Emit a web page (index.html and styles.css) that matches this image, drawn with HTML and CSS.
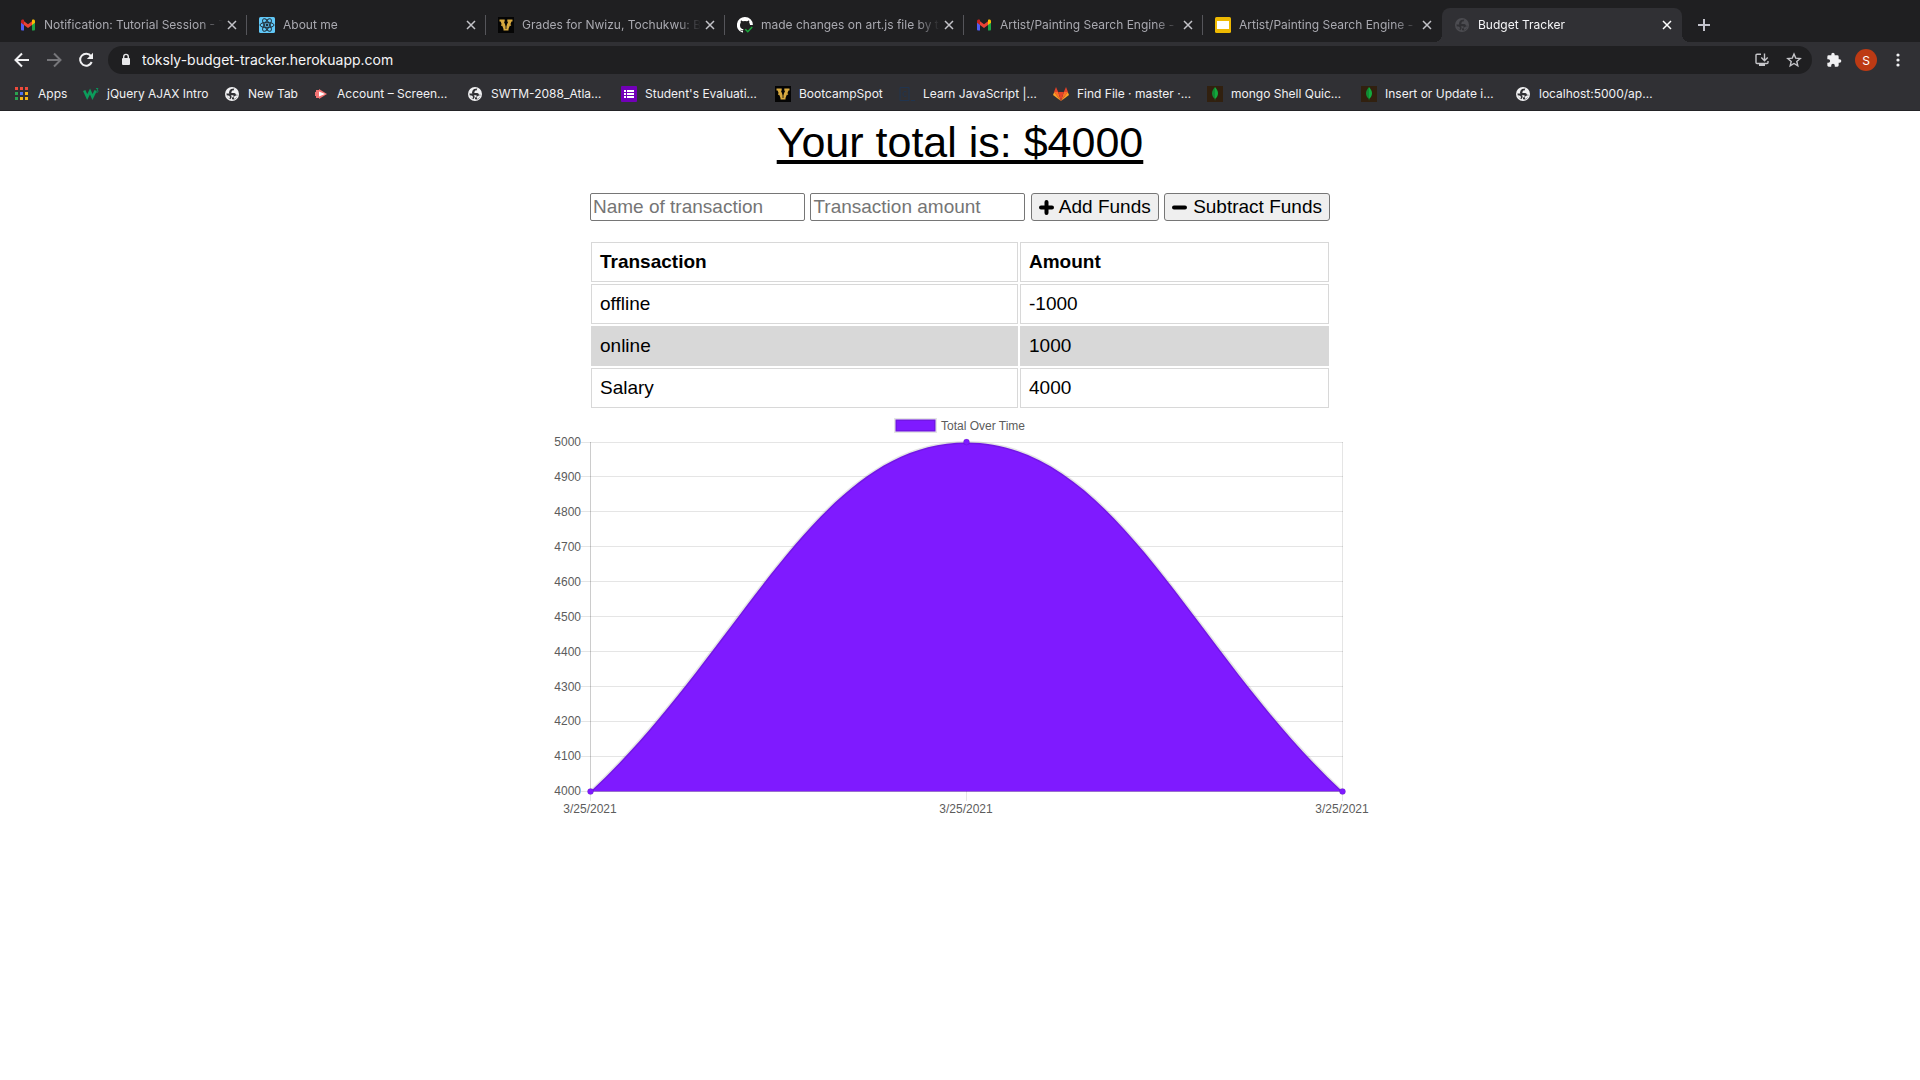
FILE: index.html
```html
<!DOCTYPE html>
<html lang="en">
<head>
<meta charset="utf-8">
<title>Budget Tracker</title>
<link rel="stylesheet" href="styles.css">
</head>
<body>
<svg class="defs" aria-hidden="true">
  <symbol id="gmail" viewBox="0 0 16 16">
    <path fill="#4f5df5" d="M1 5v7.500q0 1 1 1h2V7z"/>
    <path fill="#1ea446" d="M15 5v7.500q0 1-1 1h-2V7z"/>
    <path fill="#ea4335" d="M4 4.200 8 7.200l4-3v3.900l-4 3-4-3z"/>
    <path fill="#c5221f" d="M1 4.300C1 2.500 2.800 2 4 2.900v5.200L1 5.800z"/>
    <path fill="#fbbc04" d="M15 4.300c0-1.800-1.800-2.300-3-1.400v5.200l3-2.300z"/>
  </symbol>
  <symbol id="react" viewBox="0 0 16 16">
    <rect width="16" height="16" rx="1.500" fill="#61c8f8"/>
    <g fill="none" stroke="#20303c" stroke-width="1">
      <ellipse cx="8" cy="8" rx="7" ry="2.700"/>
      <ellipse cx="8" cy="8" rx="7" ry="2.700" transform="rotate(60 8 8)"/>
      <ellipse cx="8" cy="8" rx="7" ry="2.700" transform="rotate(120 8 8)"/>
    </g>
    <circle cx="8" cy="8" r="1.400" fill="#20303c"/>
  </symbol>
  <symbol id="vandy" viewBox="0 0 16 16">
    <rect width="16" height="16" fill="#050505"/>
    <path fill="#d8a93f" d="M1.500 2.500h5.200v2.200h-.8L8 9.500l2.200-4.800h-.9V2.500h5.200v2h-1l-1.200 3h.8v1.200h-1.300L10.500 12v1.500h-5V12L4.200 8.700H3V7.500h.8l-1.200-3H1.500z"/>
    <path stroke="#050505" stroke-width=".8" d="M8 5v7"/>
  </symbol>
  <symbol id="github" viewBox="0 0 16 16">
    <path fill="#fff" d="M8 0a8 8 0 0 0-2.600 15.600c.4.100.6-.2.600-.4v-1.400c-2.300.5-2.800-1-2.800-1 .5 0 .9.800 2.800.5.100-.6.300-1 .6-1.200C4.800 11.900 3 11 3 7.900c0-.9.300-1.600.8-2.200-.2-.6-.2-1.400.2-2.300 0 0 .8 0 2 .9a7 7 0 0 1 4 0c1.200-.9 2-.9 2-.9.400.9.400 1.700.2 2.300.5.600.8 1.300.8 2.200h2.900A8 8 0 0 0 8 0z"/>
    <path fill="none" stroke="#1aab3b" stroke-width="1.500" d="m8.300 12.200 2.500 2.500L15.200 10"/>
  </symbol>
  <symbol id="slides" viewBox="0 0 16 16">
    <rect width="16" height="16" rx="1.500" fill="#eeb902"/><rect x="2" y="4" width="12" height="8" fill="#fff"/>
  </symbol>
  <symbol id="globe" viewBox="0 0 16 16">
    <circle cx="8" cy="8" r="7" fill="currentColor"/>
    <path fill="#303034" d="M10.300 2.600 9.500 4.500H8.200L7.400 6v1h2.800q1.600.2 1.800 1.800h1.600q-.4 3.200-3.400 4.600L8 13.300v-1.500l1.500-1.200V9.200H6.200Q5 8.800 5 6.500q.2-2.600 2-3.600z"/>
    <path fill="#303034" d="M2.400 7.600h2.900l2.200 2.500v1.600l-1.300 1.500Q3 12 2.400 7.600z"/>
    <path fill="currentColor" d="m2.600 9.200 2.600.5.800 1.300-.5 1.800Q3.200 11.800 2.600 9.200zM9.400 10.500l1.600-.3 1-1 1.600.3q-.8 2.700-3.400 3.600z"/>
  </symbol>
  <symbol id="mongo" viewBox="0 0 16 16">
    <rect width="16" height="16" fill="#31200f"/>
    <path fill="#13aa3d" d="M8 1c2 2.300 3 4 3 6.300 0 2.700-1.200 4.300-2.700 5.500L8 15z"/>
    <path fill="#118b33" d="M8 1C6 3.300 5 5 5 7.300c0 2.700 1.200 4.300 2.700 5.500L8 15z"/>
  </symbol>
  <symbol id="close" viewBox="0 0 14 14"><path fill="none" stroke="currentColor" stroke-width="1.500" d="m3 3 8 8m0-8-8 8"/></symbol>
</svg>

<div class="browser">
  <nav class="tabs" aria-label="Tabs">
    <div class="tab"><svg class="icon"><use href="#gmail"/></svg><span class="tab-title">Notification: Tutorial Session - T</span><button class="close" aria-label="Close tab"><svg><use href="#close"/></svg></button></div>
    <div class="tab"><svg class="icon"><use href="#react"/></svg><span class="tab-title">About me</span><button class="close" aria-label="Close tab"><svg><use href="#close"/></svg></button></div>
    <div class="tab"><svg class="icon"><use href="#vandy"/></svg><span class="tab-title">Grades for Nwizu, Tochukwu: B</span><button class="close" aria-label="Close tab"><svg><use href="#close"/></svg></button></div>
    <div class="tab"><svg class="icon"><use href="#github"/></svg><span class="tab-title">made changes on art.js file by t</span><button class="close" aria-label="Close tab"><svg><use href="#close"/></svg></button></div>
    <div class="tab"><svg class="icon"><use href="#gmail"/></svg><span class="tab-title">Artist/Painting Search Engine -</span><button class="close" aria-label="Close tab"><svg><use href="#close"/></svg></button></div>
    <div class="tab tab-last"><svg class="icon"><use href="#slides"/></svg><span class="tab-title">Artist/Painting Search Engine -</span><button class="close" aria-label="Close tab"><svg><use href="#close"/></svg></button></div>
    <div class="tab tab-active"><svg class="icon dim"><use href="#globe"/></svg><span class="tab-title">Budget Tracker</span><button class="close" aria-label="Close tab"><svg><use href="#close"/></svg></button></div>
    <button class="new-tab" aria-label="New tab"><svg viewBox="0 0 14 14"><path fill="none" stroke="currentColor" stroke-width="2" d="M7 1v12M1 7h12"/></svg></button>
  </nav>

  <div class="toolbar">
    <button class="tool" aria-label="Back"><svg viewBox="0 0 16 16"><path fill="none" stroke="#f1f1f3" stroke-width="2" d="M15 8H2.500M8 1.500 1.500 8 8 14.500"/></svg></button>
    <button class="tool" aria-label="Forward"><svg viewBox="0 0 16 16"><path fill="none" stroke="#76767a" stroke-width="2" d="M1 8h12.500M8 1.500 14.500 8 8 14.500"/></svg></button>
    <button class="tool" aria-label="Reload"><svg viewBox="0 0 16 16"><path fill="none" stroke="#f1f1f3" stroke-width="2" d="M13 4.200A6 6 0 1 0 13.700 10"/><path fill="#f1f1f3" d="M15 .8V7H8.800z"/></svg></button>
    <div class="omnibox">
      <svg class="lock" viewBox="0 0 10 14"><rect x="1" y="5" width="8" height="7" rx="1" fill="#e8e8ea"/><path fill="none" stroke="#e8e8ea" stroke-width="1.400" d="M2.700 5.500V3.700a2.300 2.300 0 0 1 4.600 0v1.800"/></svg>
      <input class="url" type="text" aria-label="Address" value="toksly-budget-tracker.herokuapp.com">
      <button class="tool" aria-label="Install app"><svg viewBox="0 0 16 16"><path fill="none" stroke="#c6c6ca" stroke-width="1.400" d="M7 2.200H3Q2 2.200 2 3.200v7.300q0 1 1 1h10q1 0 1-1V9M10.500 1.500v7M7.300 5.600l3.200 3.200 3.200-3.200"/><path fill="#c6c6ca" d="M5 12h6v2H5z"/></svg></button>
      <button class="tool" aria-label="Bookmark"><svg viewBox="0 0 16 16"><path fill="none" stroke="#c6c6ca" stroke-width="1.400" d="m8 2 1.700 4.100 4.500.4-3.400 2.900 1 4.400L8 11.500l-3.800 2.300 1-4.400L1.800 6.500l4.500-.4z"/></svg></button>
    </div>
    <button class="tool" aria-label="Extensions"><svg viewBox="0 0 24 24"><path fill="#f1f1f3" d="M20.500 11H19V7a2 2 0 0 0-2-2h-4V3.500a2.500 2.500 0 0 0-5 0V5H4a2 2 0 0 0-2 2v3.800h1.500a2.700 2.700 0 0 1 0 5.400H2V20c0 1.100.9 2 2 2h3.800v-1.500a2.700 2.700 0 0 1 5.400 0V22H17a2 2 0 0 0 2-2v-4h1.500a2.500 2.500 0 0 0 0-5z"/></svg></button>
    <button class="avatar" aria-label="Profile">S</button>
    <button class="tool" aria-label="Menu"><svg viewBox="0 0 16 16" fill="#f1f1f3"><circle cx="8" cy="3" r="1.600"/><circle cx="8" cy="8" r="1.600"/><circle cx="8" cy="13" r="1.600"/></svg></button>
  </div>

  <nav class="bookmarks" aria-label="Bookmarks">
    <a href="#apps" class="bm bm-apps"><svg class="icon" viewBox="0 0 16 16"><path fill="#ee4b3c" d="M1 1h3v3H1zm5 0h3v3H6zm5 0h3v3h-3z"/><path fill="#2aa350" d="M1 6h3v3H1zM1 11h3v3H1z"/><path fill="#4c74f0" d="M6 6h3v3H6z"/><path fill="#f3b917" d="M11 6h3v3h-3zM6 11h3v3H6zm5 0h3v3h-3z"/></svg><span>Apps</span></a>
    <a href="#ajax" class="bm bm-ajax"><svg class="icon" viewBox="0 0 16 16"><path fill="none" stroke="#0c9c5b" stroke-width="2.600" d="m1.200 4.500 3 6.500 2.800-5.500L9.500 11l3.200-6.500"/><path fill="none" stroke="#0c8a56" stroke-width="1" d="M13 2.500h2L14 4.200q1.500 0 1 1.600-.7 1-2 .2"/></svg><span>jQuery AJAX Intro</span></a>
    <a href="#newtab" class="bm bm-tab"><svg class="icon"><use href="#globe"/></svg><span>New Tab</span></a>
    <a href="#account" class="bm bm-long"><svg class="icon" viewBox="0 0 16 16"><path fill="#f27474" d="M3 4h3V3l8 5-8 5v-1H3v-2H2V6h1z"/><path fill="#fff" d="M6 5.500 12 8l-6 2.500z"/></svg><span>Account – Screen…</span></a>
    <a href="#swtm" class="bm bm-long"><svg class="icon"><use href="#globe"/></svg><span>SWTM-2088_Atla…</span></a>
    <a href="#student" class="bm bm-long"><svg class="icon" viewBox="0 0 16 16"><rect width="16" height="16" rx="1" fill="#7200b8"/><path fill="#fff" d="M3 4h2v2H3zm3 0h7v2H6zM3 7h2v2H3zm3 0h7v2H6zm-3 3h2v2H3zm3 0h7v2H6z"/></svg><span>Student's Evaluati…</span></a>
    <a href="#bootcamp" class="bm bm-boot"><svg class="icon"><use href="#vandy"/></svg><span>BootcampSpot</span></a>
    <a href="#learn" class="bm bm-long"><svg class="icon" viewBox="0 0 16 16"><path fill="none" stroke="#20344f" stroke-width="1" d="M1 1.500h9v13H1zM7.500 6Q4 4.500 4 8t3.500 2M12 14.500h4"/></svg><span>Learn JavaScript |…</span></a>
    <a href="#find" class="bm bm-long"><svg class="icon" viewBox="0 0 16 16"><path fill="#fca326" d="M0 9 1.200 6 8 15zm16 0-1.200-3L8 15z"/><path fill="#fc6d26" d="M1 6h4.200L8 15zm14 0h-4.200L8 15z"/><path fill="#e24329" d="m1 6 2-5 2.200 5H10.800L13 1l2 5h-4.200L8 15 5.200 6z"/></svg><span>Find File · master ·…</span></a>
    <a href="#mongo-shell" class="bm bm-long"><svg class="icon"><use href="#mongo"/></svg><span>mongo Shell Quic…</span></a>
    <a href="#insert" class="bm bm-long"><svg class="icon"><use href="#mongo"/></svg><span>Insert or Update i…</span></a>
    <a href="#localhost" class="bm bm-long"><svg class="icon"><use href="#globe"/></svg><span>localhost:5000/ap…</span></a>
  </nav>
</div>

<main class="page">
  <h1 class="total">Your total is: $4000</h1>
  <form class="form">
    <input class="field" type="text" placeholder="Name of transaction" aria-label="Name of transaction">
    <input class="field" type="text" placeholder="Transaction amount" aria-label="Transaction amount">
    <button class="btn" type="button"><svg class="sign" viewBox="0 0 15 15"><path fill="none" stroke="#000" stroke-width="4" stroke-linecap="round" d="M7.500 2v11M2 7.500h11"/></svg>Add Funds</button>
    <button class="btn btn-sub" type="button"><svg class="sign" viewBox="0 0 15 15"><path fill="none" stroke="#000" stroke-width="4" stroke-linecap="round" d="M2 7.500h11"/></svg>Subtract Funds</button>
  </form>
  <table class="ledger">
    <thead><tr><th>Transaction</th><th class="amount">Amount</th></tr></thead>
    <tbody>
      <tr><td>offline</td><td>-1000</td></tr>
      <tr><td>online</td><td>1000</td></tr>
      <tr><td>Salary</td><td>4000</td></tr>
    </tbody>
  </table>
  <svg class="chart" viewBox="0 0 820 410" role="img" aria-label="Total Over Time">
    <path class="grid" d="M31 32.500h762M31 66.500h762M31 101.500h762M31 136.500h762M31 171.500h762M31 206.500h762M31 241.500h762M31 276.500h762M31 311.500h762M31 346.500h762M416.500 32v359M792.500 32v359M40.500 382v9M31 381.500h9"/>
    <path class="area" d="M40.500 381.500C190.900 241.900 266.100 32.500 416.500 32.500S642.100 241.900 792.500 381.500z"/>
    <path class="zero" d="M40.500 32v350M40 381.500h753"/>
    <path class="line" d="M40.500 381.500C190.900 241.900 266.100 32.500 416.500 32.500S642.100 241.900 792.500 381.500"/>
    <g class="dots"><circle cx="40.500" cy="381.500" r="3"/><circle cx="416.500" cy="32" r="3"/><circle cx="792.500" cy="381.500" r="3"/></g>
    <rect class="key" x="345.500" y="9.500" width="40" height="12"/>
    <text x="391" y="20">Total Over Time</text>
    <g text-anchor="end">
      <text x="31" y="36">5000</text><text x="31" y="71">4900</text><text x="31" y="106">4800</text><text x="31" y="141">4700</text><text x="31" y="176">4600</text><text x="31" y="211">4500</text><text x="31" y="246">4400</text><text x="31" y="281">4300</text><text x="31" y="315">4200</text><text x="31" y="350">4100</text><text x="31" y="385">4000</text>
    </g>
    <g text-anchor="middle">
      <text x="40" y="403">3/25/2021</text><text x="416" y="403">3/25/2021</text><text x="792" y="403">3/25/2021</text>
    </g>
  </svg>
</main>
</body>
</html>
```
FILE: styles.css
```css
* { box-sizing: border-box; }
body {
  margin: 0;
  background: #fff;
  color: #000;
  font-family: "Liberation Sans", Arial, sans-serif;
  font-size: 19px;
}
button { font: inherit; color: inherit; cursor: pointer; }
.defs { display: none; }

.browser {
  background: #303034;
  border-bottom: 1px solid #232326;
  color: #f1f1f3;
  font-family: Inter, Roboto, sans-serif;
  font-size: 12px;
}
.icon { width: 16px; height: 16px; flex: none; }

.tabs {
  display: flex;
  height: 42px;
  padding: 8px 0 0 8px;
  background: #1f1f21;
}
.tab {
  display: flex;
  align-items: center;
  gap: 8px;
  flex: 0 1 239px;
  min-width: 0;
  padding: 0 8px 0 12px;
  color: #a9a9b0;
  background: linear-gradient(#55555a, #55555a) right center / 1px 20px no-repeat;
}
.tab-last { background: none; }
.tab-title {
  flex: 1;
  min-width: 0;
  margin-right: -6px;
  overflow: hidden;
  white-space: nowrap;
  line-height: 20px;
  -webkit-mask-image: linear-gradient(90deg, #000 calc(100% - 24px), transparent);
  mask-image: linear-gradient(90deg, #000 calc(100% - 24px), transparent);
}
.close {
  flex: none;
  width: 14px;
  height: 14px;
  padding: 0;
  border: 0;
  background: none;
  color: #c3c3c8;
}
.close svg { display: block; width: 14px; height: 14px; }
.tab-active {
  position: relative;
  flex-basis: 240px;
  background: #303034;
  border-radius: 8px 8px 0 0;
  color: #f5f5f7;
}
/* Flared feet where the active tab meets the toolbar */
.tab-active::before,
.tab-active::after {
  content: "";
  position: absolute;
  bottom: 0;
  width: 8px;
  height: 8px;
}
.tab-active::before { right: 100%; background: radial-gradient(circle at 0 0, #1f1f21 8px, #303034 8px); }
.tab-active::after { left: 100%; background: radial-gradient(circle at 100% 0, #1f1f21 8px, #303034 8px); }
.tab-active .close { color: #fff; }
.dim { color: #4c4c51; }
.new-tab {
  display: flex;
  align-items: center;
  margin-left: 10px;
  padding: 0 5px;
  border: 0;
  background: none;
  color: #c3c3cc;
}
.new-tab svg { width: 14px; height: 14px; }

.toolbar {
  display: flex;
  align-items: center;
  height: 36px;
  padding: 0 6px;
}
.tool {
  display: flex;
  justify-content: center;
  flex: none;
  width: 32px;
  padding: 0;
  border: 0;
  background: none;
}
.tool svg { width: 16px; height: 16px; }
.omnibox {
  display: flex;
  align-items: center;
  flex: 1;
  height: 28px;
  margin: 0 6px;
  padding: 0 2px 0 13px;
  border-radius: 14px;
  background: #1f1f21;
}
.lock { width: 10px; height: 14px; flex: none; }
.url {
  flex: 1;
  min-width: 0;
  margin-left: 11px;
  padding: 0;
  border: 0;
  outline: 0;
  background: none;
  color: #f5f5f7;
  font: 14px/20px Inter, Roboto, sans-serif;
}
.avatar {
  flex: none;
  width: 22px;
  height: 22px;
  margin: 0 5px;
  padding: 0;
  border: 0;
  border-radius: 50%;
  background: #bd3a14;
  color: #fff;
}

.bookmarks {
  display: flex;
  align-items: center;
  gap: 16px;
  height: 32px;
  padding-left: 14px;
}
.bm {
  display: flex;
  align-items: center;
  gap: 8px;
  flex: none;
  color: inherit;
  line-height: 16px;
  text-decoration: none;
  white-space: nowrap;
}
.bm-apps { width: 53px; }
.bm-ajax { width: 125px; }
.bm-tab { width: 73px; }
.bm-boot { width: 108px; }
.bm-long { width: 138px; }

.page {
  display: flex;
  flex-direction: column;
  align-items: center;
  padding-top: 6px;
}
.total {
  margin: 0;
  font-size: 43px;
  font-weight: 400;
  line-height: 50px;
  text-decoration: underline;
  text-decoration-thickness: 4px;
  text-underline-offset: 3px;
}
.form {
  display: flex;
  justify-content: space-between;
  width: 740px;
  max-width: 100%;
  margin: 26px 0 19px;
}
.field {
  width: 215px;
  height: 28px;
  padding: 1px 2px;
  border: 1px solid #767676;
  border-radius: 2px;
  font: inherit;
}
.field::placeholder { color: #757575; }
.btn {
  display: flex;
  align-items: center;
  gap: 5px;
  height: 28px;
  padding: 0 7px;
  border: 1px solid #767676;
  border-radius: 3px;
  background: #efefef;
  white-space: nowrap;
}
.btn-sub { gap: 6px; }
.sign { width: 15px; height: 15px; }

.ledger {
  width: 742px;
  max-width: 100%;
  border-spacing: 2px;
  line-height: 22px;
  text-align: left;
}
.ledger th, .ledger td { padding: 8px; border: 1px solid #d8d8d8; }
.amount { width: 309px; }
.ledger tbody tr:nth-child(even) { background: #d8d8d8; }

.chart {
  display: block;
  width: 820px;
  max-width: 100%;
}
.chart text { font-size: 12px; fill: #5c5c5c; }
.grid { stroke: rgba(0, 0, 0, .1); }
.zero { stroke: rgba(0, 0, 0, .2); }
.area { fill: #7f1aff; }
.line, .key { stroke: rgba(0, 0, 0, .1); stroke-width: 3px; fill: none; }
.key { fill: #7f1aff; }
.dots { fill: #7f1aff; stroke: rgba(0, 0, 0, .1); }
```
